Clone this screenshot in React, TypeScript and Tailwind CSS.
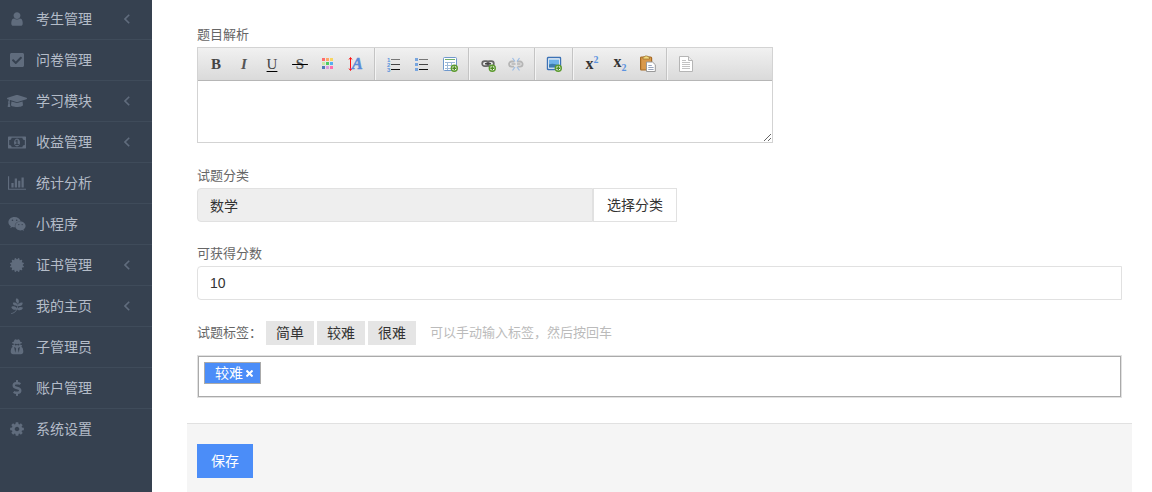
import React, { useState } from 'react';
import {
  FaCertificate,
  FaCheckSquare,
  FaDollarSign,
  FaGraduationCap,
  FaPagelines,
  FaWeixin,
} from 'react-icons/fa';

const UserIcon = () => (
  <svg viewBox="0 0 1792 1792" className="h-4 w-4" fill="currentColor">
    <path d="M1536 1399q0 109-62.5 187t-150.5 78h-854q-88 0-150.5-78t-62.5-187q0-85 8.5-160.5t31.5-152 58.5-131 94-89 134.5-34.5q131 128 313 128t313-128q76 0 134.5 34.5t94 89 58.5 131 31.5 152 8.5 160.5zm-256-887q0 159-112.5 271.5t-271.5 112.5-271.5-112.5-112.5-271.5 112.5-271.5 271.5-112.5 271.5 112.5 112.5 271.5z" />
  </svg>
);

const MoneyIcon = () => (
  <svg viewBox="0 0 1920 1792" className="h-[17px] w-[18px]" fill="currentColor">
    <path d="M768 1152h384v-96h-128v-448h-114l-148 137 77 80q42-37 55-57h2v288h-128v96zm512-256q0 70-21 142t-59.5 134-101.5 101-138 39-138-39-101.5-101-59.5-134-21-142 21-142 59.5-134 101.5-101 138-39 138 39 101.5 101 59.5 134 21 142zm512 256v-512q-106 0-181-75t-75-181h-1152q0 106-75 181t-181 75v512q106 0 181 75t75 181h1152q0-106 75-181t181-75zm128-832v1152q0 26-19 45t-45 19h-1792q-26 0-45-19t-19-45v-1152q0-26 19-45t45-19h1792q26 0 45 19t19 45z" />
  </svg>
);

const BarChartIcon = () => (
  <svg viewBox="0 0 2048 1792" className="h-4 w-[18px]" fill="currentColor">
    <path d="M640 896v512h-256v-512h256zm384-512v1024h-256v-1024h256zm1024 1152v128h-2048v-1536h128v1408h1920zm-640-896v768h-256v-768h256zm384-384v1152h-256v-1152h256z" />
  </svg>
);

const SecretIcon = () => (
  <svg viewBox="0 0 1792 1792" className="h-4 w-4" fill="currentColor">
    <path d="M704 1536l96-448-96-128-128-64zm384 0l128-640-128 64-96 128zm104-980q-2-4-4-6-10-8-96-8-70 0-167 19-7 2-21 2t-21-2q-97-19-167-19-86 0-96 8-2 2-4 6 2 18 4 27 2 3 7.5 6.5t7.5 10.5q2 4 7.5 20.5t7 20.5 7.5 17 8.5 17 9 14 12 13.5 14 9.5 17.5 8 20.5 4 24.5 2q36 0 59-12.5t32.5-30 14.5-34.5 11.5-29.5 17.5-12.5h12q11 0 17.5 12.5t11.5 29.5 14.5 34.5 32.5 30 59 12.5q13 0 24.5-2t20.5-4 17.5-8 14-9.5 12-13.5 9-14 8.5-17 7.5-17 7-20.5 7.5-20.5q2-7 7.5-10.5t7.5-6.5q2-9 4-27zm408 879q0 121-73 190t-194 69h-874q-121 0-194-69t-73-190q0-61 4.5-118t19-125.5 37.5-123.5 63.5-103.5 93.5-74.5l-90-220h214q-22-64-22-128 0-12 2-32-194-40-194-96 0-57 210-99 17-62 51.5-134t70.5-114q32-37 76-37 30 0 84 31t84 31 84-31 84-31q44 0 76 37 36 42 70.5 114t51.5 134q210 42 210 99 0 56-194 96 7 81-20 160h214l-82 225q63 33 107.5 96.5t65.5 143.5 29 151.5 8 157.5z" />
  </svg>
);

const CogIcon = () => (
  <svg viewBox="0 0 1792 1792" className="h-4 w-4" fill="currentColor">
    <path d="M1152 896q0-106-75-181t-181-75-181 75-75 181 75 181 181 75 181-75 75-181zm512-109v222q0 12-8 23t-20 13l-185 28q-19 54-39 91 35 50 107 138 10 12 10 25t-9 23q-27 37-99 108t-94 71q-12 0-26-9l-138-108q-44 23-91 38-16 136-29 186-7 28-36 28h-222q-14 0-24.5-8.5t-11.5-21.5l-28-184q-49-16-90-37l-141 107q-10 9-25 9-14 0-25-11-126-114-165-168-7-10-7-23 0-12 8-23 15-21 51-66.5t54-70.5q-27-50-41-99l-183-27q-13-2-21-12.5t-8-23.5v-222q0-12 8-23t19-13l186-28q14-46 39-92-40-57-107-138-10-12-10-24 0-10 9-23 26-36 98.5-107.5t94.5-71.5q13 0 26 10l138 107q44-23 91-38 16-136 29-186 7-28 36-28h222q14 0 24.5 8.5t11.5 21.5l28 184q49 16 90 37l142-107q9-9 24-9 13 0 25 10 129 119 165 170 7 8 7 22 0 12-8 23-15 21-51 66.5t-54 70.5q26 50 41 98l183 28q13 2 21 12.5t8 23.5z" />
  </svg>
);

const AngleLeft = () => (
  <svg viewBox="0 0 6 10" className="h-[10px] w-[6px]" fill="none" stroke="currentColor" strokeWidth="1.6">
    <path d="M5.2 0.8L1 5l4.2 4.2" />
  </svg>
);

const menu = [
  { label: '考生管理', icon: <UserIcon />, sub: true },
  { label: '问卷管理', icon: <FaCheckSquare size={16} />, sub: false },
  { label: '学习模块', icon: <FaGraduationCap size={20} />, sub: true },
  { label: '收益管理', icon: <MoneyIcon />, sub: true },
  { label: '统计分析', icon: <BarChartIcon />, sub: false },
  { label: '小程序', icon: <FaWeixin size={18} />, sub: false },
  { label: '证书管理', icon: <FaCertificate size={14} />, sub: true },
  { label: '我的主页', icon: <FaPagelines size={16} />, sub: true },
  { label: '子管理员', icon: <SecretIcon />, sub: false },
  { label: '账户管理', icon: <FaDollarSign size={16} />, sub: false },
  { label: '系统设置', icon: <CogIcon />, sub: false },
];

// green "add" badge shared by the table, link and image tools
const AddBadge = () => (
  <g>
    <circle cx="12.3" cy="12.3" r="3" fill="#fff" stroke="#5b9a2d" strokeWidth="1.4" />
    <path d="M12.3 10.3v4M10.3 12.3h4" stroke="#4d8a22" strokeWidth="1.4" />
  </g>
);

const Tool = ({ children }: { children: React.ReactNode }) => (
  <svg viewBox="0 0 16 16" className="h-4 w-4 overflow-visible">
    {children}
  </svg>
);

const swatches = ['#ff6b6b', '#ffa769', '#f7d560', '#c9e8a6', '#4dcb63', '#55aef0', '#4f78b8', '#d99be0', '#ff6fae'];

const toolGroups = [
  [
    { name: '粗体', icon: <b className="text-[#444]">B</b> },
    { name: '斜体', icon: <b className="text-[#555] italic">I</b> },
    { name: '下划线', icon: <u className="text-[#444] decoration-black underline-offset-2">U</u> },
    { name: '删除线', icon: <s className="font-bold text-[#555] decoration-black">&nbsp;S&nbsp;</s> },
    {
      name: '文字颜色',
      icon: (
        <Tool>
          {swatches.map((color, i) => (
            <rect key={color} x={2 + (i % 3) * 4} y={2 + Math.floor(i / 3) * 4} width="3" height="3" fill={color} />
          ))}
        </Tool>
      ),
    },
    {
      name: '字号',
      icon: (
        <Tool>
          <path d="M2.5 2v12M1 3.5l1.5-2 1.5 2M1 12.5l1.5 2 1.5-2" fill="none" stroke="#f11" />
          <text x="4" y="13" fontSize="16" fontWeight="bold" fontStyle="italic" fill="#5b8ad8" stroke="#5b8ad8" strokeWidth="0.5">A</text>
        </Tool>
      ),
    },
  ],
  [
    {
      name: '编号列表',
      icon: (
        <Tool>
          <g fontSize="6" fontWeight="bold" fontFamily="Liberation Sans, sans-serif" fill="#5a93dc">
            <text x="1" y="6">1</text>
            <text x="1" y="11">2</text>
            <text x="1" y="16">3</text>
          </g>
          <path d="M5 3.5h9" stroke="#777" />
          <path d="M5 8.5h9" stroke="#444" />
          <path d="M5 13.5h9" stroke="#111" />
        </Tool>
      ),
    },
    {
      name: '项目列表',
      icon: (
        <Tool>
          <path d="M1 2h3v3H1zM1 7h3v3H1zM1 12h3v3H1z" fill="#78a6df" />
          <path d="M5 3.5h9" stroke="#777" />
          <path d="M5 8.5h9" stroke="#444" />
          <path d="M5 13.5h9" stroke="#111" />
        </Tool>
      ),
    },
    {
      name: '表格',
      icon: (
        <Tool>
          <rect x="1.5" y="1.5" width="13" height="13" rx="1" fill="#fff" stroke="#6f98cc" />
          <path d="M3 3.5h10" stroke="#72b06a" />
          <path d="M3 6.5h10M3 9.5h10M3 12.5h10M5.5 6v8M9.5 6v8" stroke="#9db8d8" />
          <AddBadge />
        </Tool>
      ),
    },
  ],
  [
    {
      name: '插入链接',
      icon: (
        <Tool>
          <rect x="2.2" y="5.2" width="6.5" height="5" rx="2.4" fill="none" stroke="#666" strokeWidth="1.7" />
          <rect x="7.3" y="5.2" width="6.5" height="5" rx="2.4" fill="none" stroke="#666" strokeWidth="1.7" />
          <path d="M5 7.7h6" stroke="#444" strokeWidth="1.5" />
          <AddBadge />
        </Tool>
      ),
    },
    {
      name: '取消链接',
      icon: (
        <Tool>
          <g fill="none" opacity="0.8">
            <path d="M6.5 5.5H3.6a2.6 2.6 0 000 5.2H6M9 5.5H12a2.6 2.6 0 010 5.2H9.5" stroke="#aaa" strokeWidth="1.8" />
            <path d="M3.5 8h4M9 8h3.5" stroke="#aaa" strokeWidth="1.4" />
            <path d="M4.5 2l2.5 3.5M11.5 2L9 5.5M4.5 14.5L7 11M11.5 14.5L9 11" stroke="#8bb4e6" strokeWidth="1.2" />
          </g>
        </Tool>
      ),
    },
  ],
  [
    {
      name: '插入图片',
      icon: (
        <Tool>
          <rect x="1.5" y="1.5" width="13" height="12" rx="0.5" fill="#fff" stroke="#3c72b5" strokeWidth="1.4" />
          <rect x="3" y="3.5" width="10" height="8" fill="#6fb2e8" />
          <path d="M3 11.5V8.5q4-2 10 1v2z" fill="#3e7cad" />
          <AddBadge />
        </Tool>
      ),
    },
  ],
  [
    {
      name: '上标',
      icon: (
        <span className="flex font-bold text-[#333]">
          <span className="text-base leading-5">x</span>
          <span className="text-[10px] leading-3 text-[#5b93e0]">2</span>
        </span>
      ),
    },
    {
      name: '下标',
      icon: (
        <span className="flex items-end font-bold text-[#333]">
          <span className="pb-1 text-base leading-4">x</span>
          <span className="text-[10px] leading-3 text-[#5b93e0]">2</span>
        </span>
      ),
    },
    {
      name: '粘贴',
      icon: (
        <Tool>
          <rect x="0.6" y="1" width="11" height="13" rx="1" fill="#d9994c" stroke="#a66a24" strokeWidth="1.2" />
          <path d="M3 3V1h1.5L5 0h2.5l0.5 1h1.5v2z" fill="#f5dc83" stroke="#9a7128" strokeWidth="0.7" />
          <path d="M6.5 6h6l2.8 2.7v6.8H6.5z" fill="#fff" stroke="#999" />
          <path d="M8.3 9.5h3.5M8.3 11.5h5.3M8.3 13.5h5.3" stroke="#8c9bb5" strokeWidth="0.9" />
        </Tool>
      ),
    },
  ],
  [
    {
      name: '源码',
      icon: (
        <Tool>
          <path d="M1.5 0.5h9l4 4v11h-13z" fill="#fff" stroke="#b5b5b5" />
          <path d="M10.5 0.5v4h4" fill="#eee" stroke="#b5b5b5" />
          <path d="M4 4.5h4M4 6.5h8M4 8.5h8M4 10.5h8M4 12.5h8" stroke="#bbb" strokeWidth="0.9" />
        </Tool>
      ),
    },
  ],
];

const presetTags = ['简单', '较难', '很难'];

function Sidebar() {
  return (
    <nav className="w-[152px] shrink-0 bg-[#364150]">
      <ul className="-mt-px">
        {menu.map((item, i) => (
          <li key={item.label} className={i < menu.length - 1 ? 'border-b border-[#3f4b5a]' : ''}>
            <a href="#" className="flex h-10 items-center pr-[22px] pl-[7px] text-[#606c7d]">
              <span className="flex w-5 shrink-0 justify-center">{item.icon}</span>
              <span className="ml-[9px] flex-1 text-sm text-[#b4bcc8]">{item.label}</span>
              {item.sub && <AngleLeft />}
            </a>
          </li>
        ))}
      </ul>
    </nav>
  );
}

function Editor() {
  return (
    <div className="w-[576px] max-w-full border border-[#d3d3d3]">
      <div className="flex h-[33px] border-b border-[#b6b6b6] bg-linear-to-b from-[#f1f1f1] to-[#dadada]">
        {toolGroups.map((group, i) => (
          <div key={i} className="flex">
            <div className="flex items-center px-1">
              {group.map(tool => (
                <button
                  key={tool.name}
                  type="button"
                  title={tool.name}
                  className="flex h-7 w-7 items-center justify-center font-['Liberation_Serif',serif] text-[15px] leading-5"
                >
                  {tool.icon}
                </button>
              ))}
            </div>
            {i < toolGroups.length - 1 && <div className="w-[2px] border-r border-l border-r-[#f4f4f4] border-l-[#c4c4c4]" />}
          </div>
        ))}
      </div>
      <textarea id="analysis" className="block h-[61px] w-full resize-y bg-white p-2 text-sm outline-none" />
    </div>
  );
}

export default function App() {
  const [score, setScore] = useState('10');
  const [tags, setTags] = useState(['较难']);
  const [draft, setDraft] = useState('');

  const addTag = (tag: string) => {
    if (tag && !tags.includes(tag)) setTags([...tags, tag]);
  };

  const handleKeyDown = (e: React.KeyboardEvent) => {
    if (e.key !== 'Enter') return;
    e.preventDefault();
    addTag(draft.trim());
    setDraft('');
  };

  return (
    <div className="flex min-h-screen bg-white font-['Liberation_Sans','Noto_Sans_CJK_SC',sans-serif] text-sm text-[#333]">
      <Sidebar />
      <form className="flex min-w-0 flex-1 flex-col pr-5 pl-[35px]" onSubmit={e => e.preventDefault()}>
        <div className="px-[10px] pt-[25px] pb-[25px]">
          <div className="mb-[23px]">
            <label htmlFor="analysis" className="mb-[2px] block text-[13px] leading-5 text-[#666]">题目解析</label>
            <Editor />
          </div>

          <div className="mb-[22px]">
            <label htmlFor="category" className="mb-[2px] block text-[13px] leading-5 text-[#666]">试题分类</label>
            <div className="flex w-[480px] max-w-full">
              <input
                id="category"
                readOnly
                value="数学"
                className="h-[34px] min-w-0 flex-1 rounded-l border border-[#e1e1e1] bg-[#eee] px-3 text-[#333] outline-none"
              />
              <button type="button" className="h-[34px] border border-[#e1e1e1] bg-white px-[13px]">选择分类</button>
            </div>
          </div>

          <div className="mb-[21px]">
            <label htmlFor="score" className="mb-[2px] block text-[13px] leading-5 text-[#666]">可获得分数</label>
            <input
              id="score"
              value={score}
              onChange={e => setScore(e.target.value)}
              className="h-[34px] w-full rounded-l border border-[#e1e1e1] bg-white px-3 outline-none"
            />
          </div>

          <div className="mb-[10px] flex h-6 items-center">
            <label htmlFor="tags" className="w-[69px] text-[13px] text-[#666]">试题标签：</label>
            <div className="flex gap-[3px]">
              {presetTags.map(tag => (
                <button key={tag} type="button" onClick={() => addTag(tag)} className="h-6 w-12 bg-[#e5e5e5]">
                  {tag}
                </button>
              ))}
            </div>
            <span className="ml-[14px] text-[13px] text-[#bbb]">可以手动输入标签，然后按回车</span>
          </div>

          <div className="border border-[#e1e1e1]">
            <div className="flex h-[41px] items-start gap-1 border border-[#aaa] px-[5px] pt-[5px]">
              {tags.map(tag => (
                <span key={tag} className="flex h-[22px] items-center border border-[#aaa] bg-[#4b8df8] pr-[7px] pl-[10px] text-white">
                  {tag}
                  <button
                    type="button"
                    title="删除"
                    onClick={() => setTags(tags.filter(t => t !== tag))}
                    className="ml-[3px]"
                  >
                    <svg viewBox="0 0 7 7" className="h-[7px] w-[7px]" stroke="#fff" strokeWidth="2">
                      <path d="M0.5 0.5l6 6M6.5 0.5L0.5 6.5" />
                    </svg>
                  </button>
                </span>
              ))}
              <input
                id="tags"
                value={draft}
                onChange={e => setDraft(e.target.value)}
                onKeyDown={handleKeyDown}
                className="h-[22px] min-w-0 flex-1 outline-none"
              />
            </div>
          </div>
        </div>

        <div className="flex-1 border-t border-[#e1e1e1] bg-[#f5f5f5] px-[10px] pt-5 pb-[14px]">
          <button type="submit" className="h-[34px] bg-[#4b8df8] px-[14px] text-white">保存</button>
        </div>
      </form>
    </div>
  );
}
